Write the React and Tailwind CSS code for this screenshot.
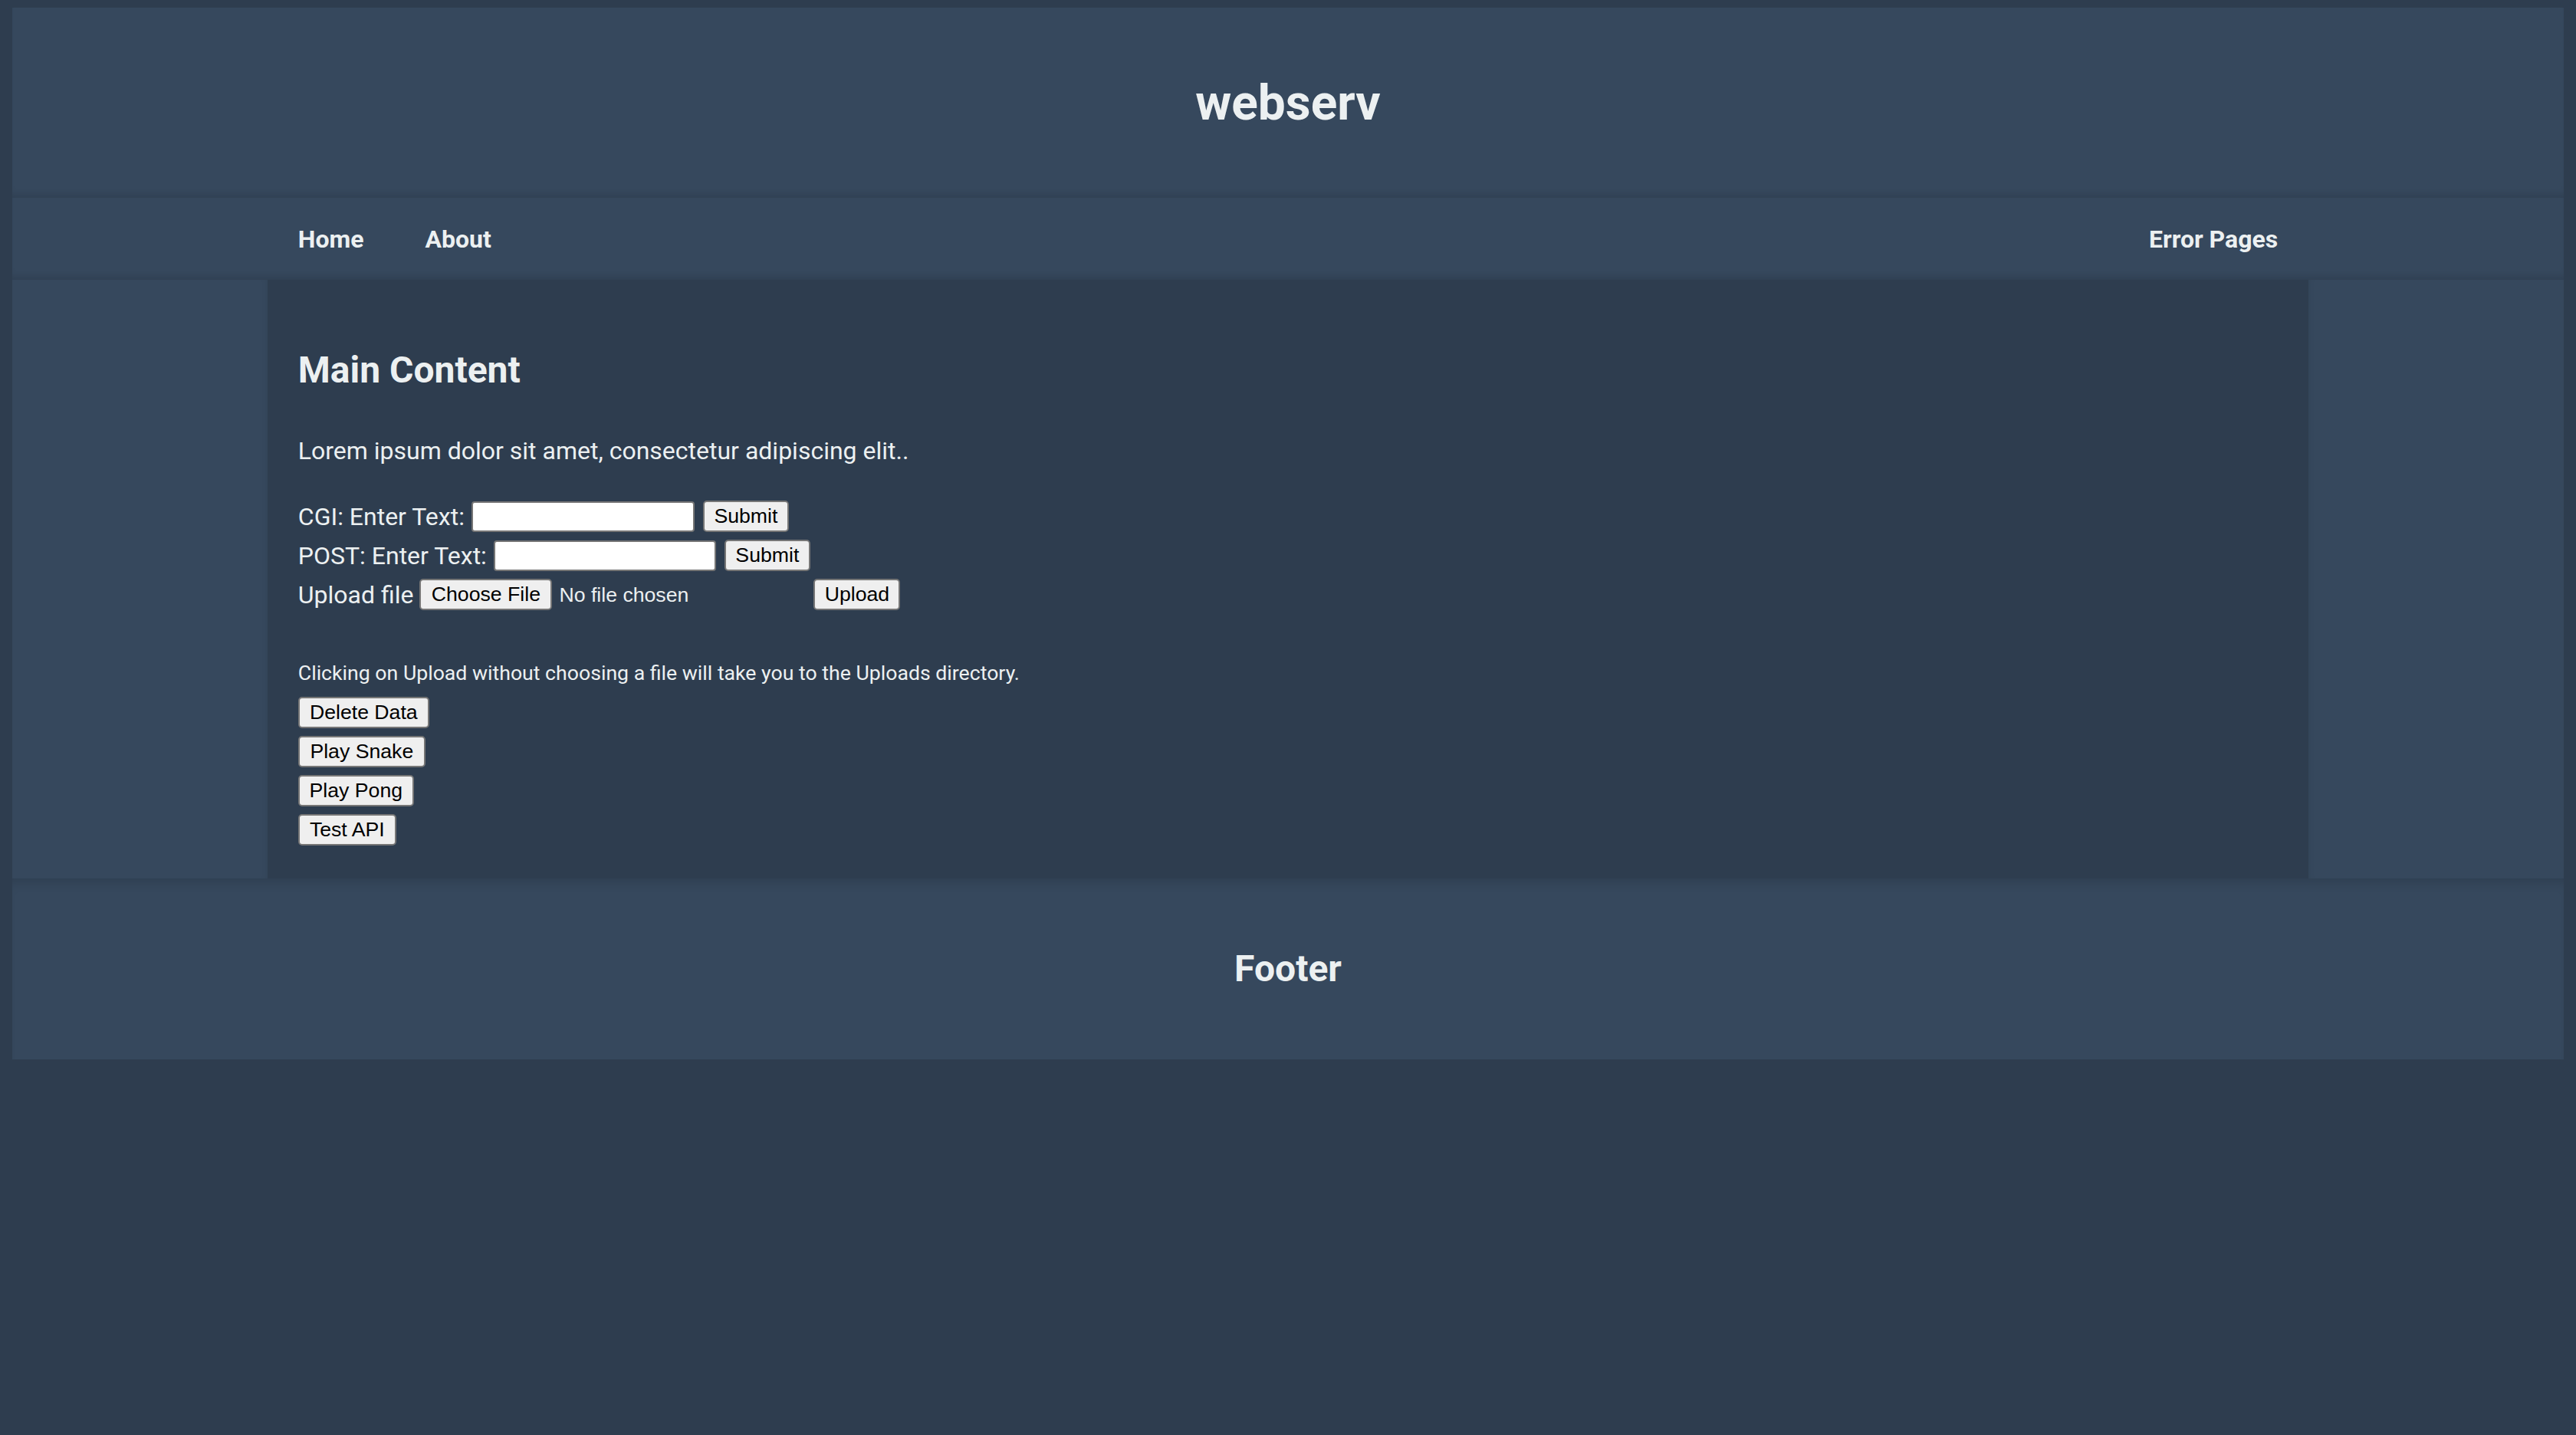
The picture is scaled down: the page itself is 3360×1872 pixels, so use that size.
import React from "react";

const roboto = { fontFamily: "Roboto, 'Liberation Sans', sans-serif" };

function Btn({ children, className = "" }) {
  return (
    <button
      type="button"
      className={
        "h-[41px] px-[12px] bg-[#efefef] border-2 border-[#767676] rounded-[5px] text-black text-[26.67px] leading-none font-['Liberation_Sans',Arial,sans-serif] " +
        className
      }
    >
      {children}
    </button>
  );
}

function TextInput({ className = "" }) {
  return (
    <input
      type="text"
      className={
        "h-[40px] bg-white border-2 border-[#767676] rounded-[4px] text-black text-[26px] px-[4px] " +
        className
      }
    />
  );
}

export default function App() {
  return (
    <div
      className="min-h-screen bg-[#2e3d4f] pt-[10px] px-[16px] text-[#ecf0f1] font-['Roboto','Liberation_Sans',sans-serif]"
      style={roboto}
    >
      <header className="h-[248px] bg-[#36485d] flex items-center justify-center shadow-[inset_0_-10px_10px_-6px_rgba(0,0,0,0.12)]">
        <h1 className="text-[64px] font-bold leading-[75px]">webserv</h1>
      </header>

      <nav className="h-[107px] bg-[#36485d] flex items-center px-[calc(10%+40px)] shadow-[inset_0_-10px_10px_-6px_rgba(0,0,0,0.12)]">
        <ul className="flex items-center gap-[80px] text-[32px] font-bold">
          <li>Home</li>
          <li>About</li>
        </ul>
        <ul className="ml-auto flex items-center text-[32px] font-bold">
          <li>Error Pages</li>
        </ul>
      </nav>

      <div className="flex">
        <aside className="w-[10%] bg-[#36485d] shadow-[inset_-6px_0_8px_-6px_rgba(0,0,0,0.08)]" />
        <main className="w-[80%] bg-[#2e3d4f] px-[40px] pt-[40px] pb-[38px]">
          <h2 className="mt-[50px] text-[48px] leading-[56px] font-bold">Main Content</h2>
          <p className="mt-[58px] text-[32px] leading-[38px]">
            Lorem ipsum dolor sit amet, consectetur adipiscing elit..
          </p>

          <div className="mt-[41px]">
            <div className="h-[51px] flex items-center text-[32px]">
              <span>CGI: Enter Text:</span>
              <TextInput className="ml-[9px] w-[291px]" />
              <Btn className="ml-[11px] w-[112px]">Submit</Btn>
            </div>
            <div className="h-[51px] flex items-center text-[32px]">
              <span>POST: Enter Text:</span>
              <TextInput className="ml-[9px] w-[290px]" />
              <Btn className="ml-[11px] w-[112px]">Submit</Btn>
            </div>
            <div className="h-[51px] flex items-center text-[32px]">
              <span>Upload file</span>
              <div className="ml-[8px] w-[505px] flex items-center">
                <Btn className="w-[173px]">Choose File</Btn>
                <span className="ml-[9px] text-[26.67px] font-['Liberation_Sans',Arial,sans-serif]">
                  No file chosen
                </span>
              </div>
              <Btn className="ml-[9px] w-[113px]">Upload</Btn>
            </div>
            <div className="h-[51px]" />
            <div className="h-[51px] flex items-center text-[26.67px]">
              Clicking on Upload without choosing a file will take you to the Uploads directory.
            </div>
          </div>

          <div className="mt-[1px]">
            <div className="h-[51px] flex items-center">
              <Btn className="w-[171px]">Delete Data</Btn>
            </div>
            <div className="h-[51px] flex items-center">
              <Btn className="w-[166px]">Play Snake</Btn>
            </div>
            <div className="h-[51px] flex items-center">
              <Btn className="w-[151px]">Play Pong</Btn>
            </div>
            <div className="h-[51px] flex items-center">
              <Btn className="w-[128px]">Test API</Btn>
            </div>
          </div>
        </main>
        <aside className="w-[10%] bg-[#36485d] shadow-[inset_6px_0_8px_-6px_rgba(0,0,0,0.08)]" />
      </div>

      <footer className="h-[236px] bg-[#36485d] flex items-center justify-center shadow-[inset_0_14px_14px_-8px_rgba(0,0,0,0.12)]">
        <h2 className="text-[48px] font-bold leading-[56px]">Footer</h2>
      </footer>
    </div>
  );
}
